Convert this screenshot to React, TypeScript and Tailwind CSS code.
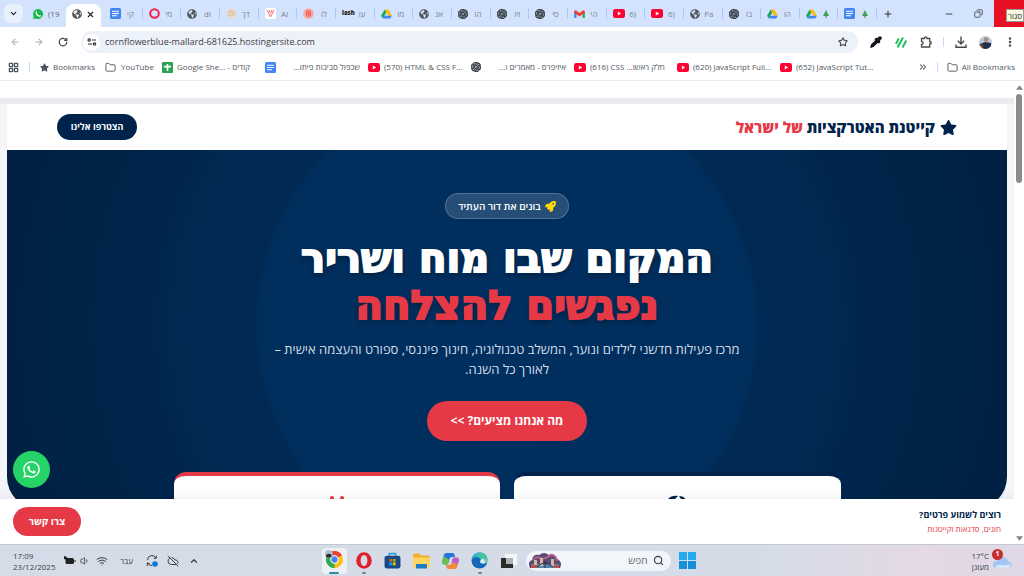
import type { ReactNode } from 'react';
import {
    ArrowLeft, ArrowRight, ChevronDown, ChevronUp, ChevronsRight, CloudOff, Copy, EllipsisVertical,
    Folder, LayoutGrid, Minus, Pipette, Plus, RotateCw, Search, Star, Volume1, Wifi, X,
} from 'lucide-react';
import { FaGlobeAmericas, FaRocket, FaStar, FaWhatsapp } from 'react-icons/fa';
import { SiOpenai } from 'react-icons/si';

type TabIcon = "docs" | "opera" | "globe" | "tan" | "y" | "pink" | "lash" | "drive" | "gpt" | "gmail" | "youtube" | "sheets";

const tabs: { icon: TabIcon; title: string }[] = [
    { icon: "docs", title: "קי" },
    { icon: "opera", title: "מי" },
    { icon: "globe", title: "di" },
    { icon: "tan", title: "דך" },
    { icon: "y", title: "AI" },
    { icon: "pink", title: "לו" },
    { icon: "lash", title: "עו" },
    { icon: "drive", title: "מו" },
    { icon: "globe", title: "אנ" },
    { icon: "gpt", title: "הו" },
    { icon: "gpt", title: "זיו" },
    { icon: "gpt", title: "סי" },
    { icon: "gmail", title: "הי" },
    { icon: "youtube", title: "6)" },
    { icon: "youtube", title: "6)" },
    { icon: "globe", title: "Pa" },
    { icon: "gpt", title: "בו" },
    { icon: "drive", title: "הו" },
    { icon: "drive", title: "tree" },
    { icon: "docs", title: "tree" },
];

const bookmarks: { icon: TabIcon; title: string; rtl?: boolean }[] = [
    { icon: "sheets", title: "Google She... - קודים" },
    { icon: "docs", title: "שכפול סביבות פיתו...", rtl: true },
    { icon: "youtube", title: "(570) HTML & CSS F..." },
    { icon: "gpt", title: "איזיפרס - מאמרים ו...", rtl: true },
    { icon: "youtube", title: "(616) CSS ...חלק ראשו" },
    { icon: "youtube", title: "(620) JavaScript Full..." },
    { icon: "youtube", title: "(652) JavaScript Tut..." },
];

function Favicon({ name }: { name: TabIcon }) {
    switch (name) {
        case "globe": return <FaGlobeAmericas className="size-[10px] shrink-0 text-[#55595f]" />;
        case "gpt": return <SiOpenai className="size-[10px] shrink-0 text-[#33383f]" stroke="currentColor" strokeWidth={1.5} />;
        case "youtube": return (
            <svg viewBox="0 0 12 9" className="h-[9px] w-[12px] shrink-0">
                <rect width="12" height="9" rx="2.2" fill="#ff0033" />
                <path d="M4.8 2.5v4l3.4-2z" fill="#fff" />
            </svg>
        );
        case "docs": return (
            <svg viewBox="0 0 11 11" className="size-[11px] shrink-0">
                <rect width="11" height="11" rx="1.5" fill="#4285f4" />
                <path d="M2 3.2h7M2 5.5h7M2 7.8h5" stroke="#fff" strokeWidth="1.1" />
            </svg>
        );
        case "sheets": return (
            <svg viewBox="0 0 11 11" className="size-[11px] shrink-0">
                <rect width="11" height="11" rx="1" fill="#2ca24f" />
                <path d="M5.5 2v7M2 4.6h7" stroke="#fff" strokeWidth="1.6" />
            </svg>
        );
        case "opera": return (
            <svg viewBox="0 0 11 11" className="size-[11px] shrink-0">
                <circle cx="5.5" cy="5.5" r="4.3" fill="none" stroke="#fa1e4e" strokeWidth="2" />
            </svg>
        );
        case "tan": return (
            <svg viewBox="0 0 11 11" className="size-[11px] shrink-0">
                <circle cx="5.5" cy="5.5" r="5" fill="#ead9c6" />
                <path d="M2 5q2-3 4-1t3 0M2 8c2-2 5-2 7 0" fill="none" stroke="#d3b896" />
            </svg>
        );
        case "y": return (
            <svg viewBox="0 0 11 11" className="size-[11px] shrink-0">
                <rect width="11" height="11" rx="2" fill="#fff" />
                <path d="M2 2l3.5 7L9 2M4 2l1.5 3L7 2" fill="none" stroke="#ee5a5a" strokeWidth="0.9" />
            </svg>
        );
        case "pink": return (
            <svg viewBox="0 0 11 11" className="size-[11px] shrink-0">
                <circle cx="5.5" cy="5.5" r="5.3" fill="#f9a8a2" />
                <path d="M3.5 3h4v5h-4zM3.5 5.5h4M5.5 3v5" fill="none" stroke="#e8585a" strokeWidth="0.9" />
            </svg>
        );
        case "lash": return <span className="shrink-0 text-[6px] font-extrabold text-[#222]">lash</span>;
        case "drive": return (
            <svg viewBox="0 0 12 11" className="h-[10px] w-[11px] shrink-0">
                <path d="M4 .5L0 7.5l2 3 4-7z" fill="#1fa463" />
                <path d="M4 .5h4l4 7H8z" fill="#fbbc04" />
                <path d="M3.7 7.5H12l-2 3H2z" fill="#4285f4" />
            </svg>
        );
        case "gmail": return (
            <svg viewBox="0 0 12 9" className="h-[8px] w-[11px] shrink-0">
                <path d="M0 1.5v7.5h2.6V4z" fill="#4285f4" />
                <path d="M12 1.5v7.5H9.4V4z" fill="#34a853" />
                <path d="M0 1.5L1.5 0 6 3.5 10.5 0 12 1.5 12 3 6 7.2 0 3z" fill="#ea4335" />
            </svg>
        );
    }
}

function Tree() {
    return (
        <svg viewBox="0 0 6 8" className="h-[8px] w-[6px]">
            <path d="M3 0l3 6H0z" fill="#3fa557" />
            <path d="M3 5.5v2.5" stroke="#7b5a3a" />
        </svg>
    );
}

function TabStrip() {
    return (
        <div className="flex h-[27px] items-center bg-[#d3e3fd] text-[8px] text-[#5c6470]">
            <button aria-label="Search tabs" className="ml-1 flex size-[19px] items-center justify-center rounded-md bg-[#e9f0fd]">
                <ChevronDown className="size-[9px] text-[#1f1f1f]" strokeWidth={3} />
            </button>
            <button className="flex w-[43px] items-center gap-[5px] pl-[10px]">
                <svg viewBox="0 0 10 10" className="size-[10px] shrink-0">
                    <path d="M5 0a5 5 0 1 1-2.300 9.400L0 10l.7-2.600A5 5 0 0 1 5 0z" fill="#12b84b" />
                    <path d="M3.300 3q-.5 1.500 1 3t3 1" fill="none" stroke="#fff" strokeWidth="1.400" strokeLinecap="round" />
                </svg>
                <span>(19</span>
            </button>
            <div className="flex h-[23px] w-[35px] shrink-0 items-center justify-between self-end rounded-t-lg bg-white px-[6px] pb-[3px]">
                <Favicon name="globe" />
                <button aria-label="Close tab"><X className="size-[9px] text-[#1f1f1f]" strokeWidth={3} /></button>
            </div>
            <div className="flex min-w-0 flex-1 pl-[3px]">
                {tabs.map((tab, i) => (
                    <button key={i} className="flex h-[11px] min-w-0 flex-1 items-center justify-between border-r border-[#a8c7fa] pr-[8px] pl-[6px]">
                        <Favicon name={tab.icon} />
                        {tab.title === "tree" ? <Tree /> : <span className="whitespace-nowrap text-[#7a828e]" dir="auto">{tab.title}</span>}
                    </button>
                ))}
            </div>
            <button aria-label="New tab" className="flex w-[22px] justify-center"><Plus className="size-[10px] text-[#333]" strokeWidth={2.5} /></button>
            <div className="ml-[45px] flex items-center gap-[20px]">
                <button aria-label="Minimize"><Minus className="size-[10px] text-[#222]" /></button>
                <button aria-label="Restore"><Copy className="size-[9px] -scale-x-100 text-[#333]" /></button>
            </div>
            <button className="ml-[11px] flex h-full w-[30px] items-center justify-end bg-[#e81123]">
                <span className="mt-1 border border-[#999] bg-[#fbf7df] px-[1px] text-[8px] leading-[11px] text-[#333]">סגור</span>
            </button>
        </div>
    );
}

function Toolbar() {
    return (
        <div className="flex h-[30px] items-center bg-white pr-2 pl-[10px] text-[#474747]">
            <button aria-label="Back" className="mr-[14px]"><ArrowLeft className="size-[10px] text-[#aaa]" strokeWidth={2.5} /></button>
            <button aria-label="Forward" className="mr-[14px]"><ArrowRight className="size-[10px] text-[#aaa]" strokeWidth={2.5} /></button>
            <button aria-label="Reload"><RotateCw className="size-[10px]" strokeWidth={3} /></button>
            <div className="ml-[13px] flex h-[22px] flex-1 items-center rounded-full bg-[#edf1fa] pr-[10px] pl-[2px]">
                <span className="flex size-[17px] items-center justify-center rounded-full bg-white">
                    <svg viewBox="0 0 10 8" className="h-[8px] w-[10px]" fill="none" stroke="#333" strokeWidth="1.2">
                        <circle cx="2.2" cy="2" r="1.2" />
                        <path d="M5 2h4M1 6h4" />
                        <circle cx="7.5" cy="6" r="1.2" />
                    </svg>
                </span>
                <input
                    aria-label="Address"
                    className="ml-[5px] min-w-0 flex-1 bg-transparent text-[9px] text-[#3c4043] outline-none"
                    defaultValue="cornflowerblue-mallard-681625.hostingersite.com"
                />
                <button aria-label="Bookmark this page"><Star className="size-[10px]" strokeWidth={2.5} /></button>
            </div>
            <div className="ml-[12px] flex items-center gap-[13px]">
                <Pipette className="size-[12px] fill-[#1c2a5c] text-[#111]" strokeWidth={3} />
                <svg viewBox="0 0 12 11" className="h-[11px] w-[12px]" stroke="#1fbf5b" strokeWidth="2">
                    <path d="M.8 7l3-5.5M2.5 10.5L8 .5M7.5 10.5L11.3 3.5" />
                </svg>
                <svg viewBox="0 0 12 12" className="size-[12px]" fill="none" stroke="#474747" strokeWidth="1.3">
                    <path d="M1.5 2.5H4.5V1.8a1.2 1 0 0 1 2.4 0V2.5H9.7V5.5H10.2a1 1.2 0 0 1 0 2.4H9.7V11H1.5V8.500a1.600 1.600 0 0 0 0-3.200z" />
                </svg>
            </div>
            <span className="mx-[11px] h-[10px] w-px bg-[#c7dafb]" />
            <button aria-label="Downloads">
                <svg viewBox="0 0 12 12" className="size-[12px]" fill="none" stroke="#474747" strokeWidth="1.4">
                    <path d="M6 .5v7M2.8 4.8L6 8l3.2-3.2M1 8.5v2.7h10V8.5" />
                </svg>
            </button>
            <svg viewBox="0 0 13 13" className="mx-3 size-[13px] rounded-full">
                <rect width="13" height="13" fill="#b6c9dd" />
                <circle cx="7" cy="3.5" r="2.3" fill="#b98a6d" />
                <path d="M1 8l5-2 6 1v6H3z" fill="#26304a" />
                <path d="M0 8l4 1v4H0z" fill="#70533f" />
            </svg>
            <button aria-label="Menu"><EllipsisVertical className="size-[12px]" strokeWidth={3} /></button>
        </div>
    );
}

function BookmarksBar() {
    return (
        <nav className="flex h-[24px] items-center border-b border-[#e8eaee] bg-white pr-[9px] pb-[3px] pl-2 text-[8px] whitespace-nowrap text-[#50565e]">
            <LayoutGrid className="size-[11px]" strokeWidth={3} />
            <span className="mx-[10px] h-[10px] w-px bg-[#c7dafb]" />
            <a href="#" className="flex w-[53px] items-center gap-1"><FaStar className="size-[9px] shrink-0" />Bookmarks</a>
            <a href="#" className="ml-[12px] flex w-[46px] items-center gap-[5px]"><Folder className="size-[11px] shrink-0" />YouTube</a>
            <div className="ml-[11px] flex gap-[8px]">
                {bookmarks.map((b) => (
                    <a key={b.title} href="#" className="flex w-[95px] items-center gap-[4px]">
                        <Favicon name={b.icon} />
                        <span className="flex-1" dir={b.rtl ? "rtl" : "ltr"}>{b.title}</span>
                    </a>
                ))}
            </div>
            <ChevronsRight className="mr-[9px] ml-auto size-[10px]" strokeWidth={2.5} />
            <span className="mr-[9px] h-[10px] w-px bg-[#c7dafb]" />
            <a href="#" className="flex items-center gap-1"><Folder className="size-[11px]" />All Bookmarks</a>
        </nav>
    );
}

function Card({ className, children }: { className: string; children: ReactNode }) {
    return (
        <article className={`flex h-[120px] flex-1 justify-center rounded-xl border-t-4 bg-white pt-[19px] ${className}`}>
            {children}
        </article>
    );
}

function Site() {
    return (
        <div dir="rtl" className="relative flex min-w-0 flex-1 flex-col overflow-hidden bg-[#f4f5f9]">
            <div className="h-[17px] shrink-0 bg-white" />
            <div className="h-[6px] shrink-0 bg-[#ebecf0]" />
            <div className="min-h-0 flex-1 overflow-hidden px-[7px]">
                <header className="flex h-[46px] items-center justify-between bg-white px-[50px]">
                    <div className="flex items-center gap-[5px] text-[15px] font-extrabold text-[#00234b]">
                        <FaStar className="size-[17px]" />
                        <span>קייטנת האטרקציות <span className="text-[#e63946]">של ישראל</span></span>
                    </div>
                    <button className="h-[26px] w-[80px] rounded-full bg-[#00234b] text-[9px] font-bold text-white">הצטרפו אלינו</button>
                </header>
                <section className="flex h-[359px] flex-col items-center rounded-b-[32px] bg-[radial-gradient(circle_at_50%_175px,#003061_0px,#002e5c_248px,#002a53_252px,#002950_340px,#00264e_350px,#00254b_400px,#002448_412px,#002347_475px,#002144_485px)] pt-[43px] text-center text-white">
                    <div className="flex h-[26px] shrink-0 items-center gap-1 rounded-full border border-white/20 bg-white/15 px-3 text-[10px] font-semibold">
                        <FaRocket className="size-[11px] text-[#ffd60a]" />
                        בונים את דור העתיד
                    </div>
                    <h1 className="mt-4 shrink-0 font-['DejaVu_Sans','Open_Sans',sans-serif] text-[40px] leading-[47px] font-bold whitespace-nowrap [-webkit-text-stroke:2px_currentColor] [text-shadow:0_3px_6px_rgba(0,0,0,0.4)]">
                        המקום שבו מוח ושריר
                        <span className="block text-[#e63946]">נפגשים להצלחה</span>
                    </h1>
                    <p className="mt-[10px] w-[480px] shrink-0 text-[13px] leading-[20px] text-[#d3dce6]">
                        מרכז פעילות חדשני לילדים ונוער, המשלב טכנולוגיה, חינוך פיננסי, ספורט והעצמה אישית – לאורך כל השנה.
                    </p>
                    <button className="mt-[22px] h-[40px] w-[160px] shrink-0 rounded-full bg-[#e63946] text-[12px] font-bold">
                        מה אנחנו מציעים? &gt;&gt;
                    </button>
                    <div className="mt-[31px] flex w-[667px] gap-[14px]">
                        <Card className="border-[#00234b]">
                            <svg viewBox="0 0 20 16" className="h-[16px] w-[20px]" fill="#00234b">
                                <path d="M1 4q4-4 10-3L7 5zM12 1q6 0 7 5l-5-2z" />
                            </svg>
                        </Card>
                        <Card className="border-[#e63946]">
                            <svg viewBox="0 0 20 16" className="h-[16px] w-[20px]" fill="#e63946">
                                <rect x="3" y="1" width="4" height="8" rx="2" />
                                <rect x="13" y="1" width="4" height="8" rx="2" />
                            </svg>
                        </Card>
                    </div>
                </section>
            </div>
            <a href="#" aria-label="WhatsApp" className="absolute bottom-14 left-[13px] flex size-[37px] items-center justify-center rounded-full bg-[#25d366] text-white">
                <FaWhatsapp className="size-[19px]" />
            </a>
            <footer className="z-10 flex h-[45px] shrink-0 items-center justify-between bg-white px-[13px] shadow-[0_-4px_8px_rgba(0,0,0,0.05)]">
                <div>
                    <p className="text-[9px] leading-[14px] font-bold text-[#00234b]">רוצים לשמוע פרטים?</p>
                    <p className="text-[8px] leading-[14px] text-[#e63946]">חוגים, סדנאות וקייטנות</p>
                </div>
                <button className="h-[29px] w-[68px] rounded-full bg-[#e63946] text-[10px] font-bold text-white">צרו קשר</button>
            </footer>
        </div>
    );
}

function Scrollbar() {
    return (
        <div className="flex w-[10px] shrink-0 flex-col items-center justify-between bg-white pt-[4px] pb-[3px]">
            <div className="flex flex-col items-center gap-1">
                <svg viewBox="0 0 6 4" className="h-[5px] w-[7px]"><path d="M3 0l3 4H0z" fill="#858585" /></svg>
                <div className="h-[89px] w-[6px] rounded-full bg-[#8b8b8b]" />
            </div>
            <svg viewBox="0 0 6 4" className="h-[5px] w-[7px]"><path d="M0 0h6L3 4z" fill="#858585" /></svg>
        </div>
    );
}

function TaskbarApp({ label, mark, children }: { label: string; mark?: string; children: ReactNode }) {
    return (
        <button aria-label={label} className="flex h-[26px] w-[18px] flex-col items-center justify-end gap-[3px]">
            {children}
            <span className={`h-[2px] w-1 rounded-full ${mark ?? ""}`} />
        </button>
    );
}

function Taskbar() {
    return (
        <div className="flex h-[32px] shrink-0 items-center border-t border-[#c3c9d3] bg-linear-to-r from-[#d5dce8] from-75% via-[#e4d9e5] via-90% to-[#e0d8e6] text-[8px] text-[#3b3f45]">
            <div className="flex flex-1 items-center pl-[13px]">
                <div className="w-[51px] leading-[11px]">17:09<br />23/12/2025</div>
                <svg viewBox="0 0 12 9" className="h-[9px] w-[12px]">
                    <rect x="1.5" y="2" width="8.5" height="6" rx="1.5" fill="#222" />
                    <path d="M10.5 4h1v2h-1zM0 0l3 1v3L0 3z" fill="#222" />
                </svg>
                <Volume1 className="ml-1 size-[10px]" />
                <Wifi className="ml-[6px] size-[12px]" />
                <span className="ml-3 w-[26px]">עבר</span>
                <svg viewBox="0 0 12 12" className="size-[12px]" fill="none" stroke="#3b3f45" strokeWidth="1">
                    <path d="M1.5 5A4.5 4.5 0 0 1 10 3M10.3.8V3.3H7.8M1.5 7.5A4.5 4.5 0 0 0 6 10.5M1.2 11V8.3h2.5" />
                    <circle cx="9" cy="9" r="2.8" fill="#0f78d4" stroke="none" />
                </svg>
                <CloudOff className="ml-[9px] size-[12px]" />
                <ChevronUp className="ml-[10px] size-[10px]" strokeWidth={3} />
            </div>
            <div className="mr-2 flex items-center gap-2">
                <button aria-label="Chrome" className="flex h-[26px] w-[25px] flex-col items-center justify-end gap-[3px] rounded-sm bg-[#edf0f6]">
                    <svg viewBox="0 0 20 20" className="size-[19px]">
                        <circle cx="10" cy="10" r="9" fill="#fbc116" />
                        <path d="M10 10L2.2 5.5A9 9 0 0 1 17.8 5.5z" fill="#ea4335" />
                        <path d="M10 10L2.2 5.5A9 9 0 0 0 10 19z" fill="#34a853" />
                        <circle cx="10" cy="10" r="4.4" fill="#fff" />
                        <circle cx="10" cy="10" r="3.3" fill="#4285f4" />
                        <circle cx="4" cy="4" r="4" fill="#aebfd0" />
                        <path d="M1 7q0-3 3-3t3 3l-3 1z" fill="#222b38" />
                    </svg>
                    <span className="h-[2px] w-[10px] rounded-full bg-[#2b8a9c]" />
                </button>
                <div className="flex items-center gap-[11px]">
                    <TaskbarApp label="Opera" mark="bg-[#7b818b]">
                        <svg viewBox="0 0 16 17" className="h-[17px] w-[16px]">
                            <ellipse cx="8" cy="8.5" rx="7.8" ry="8.300" fill="#e0202c" />
                            <ellipse cx="8" cy="8.5" rx="3.4" ry="5.600" fill="#d5dce8" />
                        </svg>
                    </TaskbarApp>
                    <TaskbarApp label="Store">
                        <svg viewBox="0 0 16 16" className="size-[17px]">
                            <path d="M5 4V1.5h6V4" fill="none" stroke="#2aa4dc" strokeWidth="1.5" />
                            <rect x="0.5" y="3.5" width="15" height="12" rx="2" fill="#1a4a86" />
                            <path d="M5 6.5h2.7v2.7H5z" fill="#f25022" />
                            <path d="M8.3 6.5H11v2.7H8.3z" fill="#7fba00" />
                            <path d="M5 9.8h2.7v2.7H5z" fill="#00a4ef" />
                            <path d="M8.3 9.8H11v2.7H8.3z" fill="#ffb900" />
                        </svg>
                    </TaskbarApp>
                    <TaskbarApp label="Files">
                        <svg viewBox="0 0 17 15" className="h-[16px] w-[17px]">
                            <path d="M0 1.5Q0 0 1.5 0H6l2 2h7.5Q17 2 17 3.5V13H0z" fill="#efaf2c" />
                            <path d="M0 4h17v10H0z" fill="#ffd55e" />
                            <path d="M3 10.5h11V15H3z" fill="#1a7cc7" />
                        </svg>
                    </TaskbarApp>
                    <TaskbarApp label="Copilot">
                        <svg viewBox="0 0 17 16" className="h-[16px] w-[17px]">
                            <path d="M4.5 0h6q1.5 0 2 1.8l.6 2.2H9.5Q8.2 4 7.7 5.5L6.5 10Q6 11.5 4.5 11.5H2.5Q-.3 11.5.2 8.5L1.5 3Q2.2 0 4.5 0z" fill="#2378d8" />
                            <path d="M1.5 3L.2 8.5q-.5 3 2.3 3h2Q6 11.5 6.5 10l.8-3z" fill="#6cc04a" />
                            <path d="M12.5 16h-6q-1.5 0-2-1.8L3.9 12h3.6q1.3 0 1.8-1.5L10.5 6Q11 4.5 12.5 4.5h2Q17.3 4.5 16.8 7.5L15.5 13q-.7 3-3 3z" fill="#f08a3c" />
                            <path d="M10.5 6Q11 4.5 12.5 4.5h2Q17.3 4.5 16.8 7.5L16 11 9.7 9z" fill="#b95fd6" />
                        </svg>
                    </TaskbarApp>
                    <TaskbarApp label="Edge" mark="bg-[#7b818b]">
                        <svg viewBox="0 0 17 17" className="size-[17px]">
                            <circle cx="8.5" cy="8.5" r="8" fill="#1568b8" />
                            <path d="M.6 8Q1 1 8.5.5T16.5 8q-.5 4-5 3.5Q8 11 9.5 8.5 9 5 5.5 5 2 5 .6 8z" fill="#36b9d6" />
                            <path d="M9.5 8.5q-1.5 2.5 2 3 4.5.5 5-3.5L12 6z" fill="#dceaf5" />
                            <path d="M8.5.5Q16 1 16.5 8q-.3 2.5-2.5 3.3Q14 5 5.5 5z" fill="#43c97e" opacity=".7" />
                        </svg>
                    </TaskbarApp>
                    <TaskbarApp label="Task view">
                        <svg viewBox="0 0 16 15" className="h-[15px] w-[16px]">
                            <path d="M4 0h12v11H4z" fill="#f4f5f7" />
                            <path d="M0 4h5v6h7v4H0z" fill="#2b2b2b" />
                            <path d="M5 4h7v6H5z" fill="#adb1b8" />
                        </svg>
                    </TaskbarApp>
                </div>
                <div className="flex h-[20px] w-[145px] items-center rounded-full bg-[#f2f5fa] pr-[7px] pl-[2px]">
                    <svg viewBox="0 0 34 18" className="h-[18px] w-[34px]">
                        <path d="M2 16Q-1 10 4 8 5 2 11 3q5-4 10 0 7-1 8 4 6 3 3 9z" fill="#574c74" />
                        <path d="M5 8Q8 4 12 6t9-2 8 5" stroke="#b6618d" strokeWidth="2" fill="none" />
                        <path d="M3 12h28v4H3z" fill="#4f86a8" />
                        <path d="M6 8h3v6H6zM12 6h3v8h-3zM23 7h3v7h-3z" fill="#deb2a0" />
                        <path d="M9 15q8-8 16 0M17 9v7" stroke="#302c45" fill="none" />
                        <path d="M3 13h6v3H3zM26 13h5v3h-5z" fill="#b65247" />
                    </svg>
                    <input aria-label="חיפוש" dir="rtl" placeholder="חפש" className="min-w-0 flex-1 bg-transparent pr-[5px] text-[10px] outline-none placeholder:text-[#666c75]" />
                    <Search className="size-[11px]" strokeWidth={2.5} />
                </div>
                <button aria-label="Start">
                    <svg viewBox="0 0 17 17" className="size-[17px]">
                        <path d="M0 0h8v8H0zM9 0h8v8H9z" fill="#26a9ec" />
                        <path d="M0 9h8v8H0zM9 9h8v8H9z" fill="#1690d8" />
                    </svg>
                </button>
            </div>
            <div className="flex flex-1 items-center justify-end gap-[3px] pr-[12px]">
                <div className="text-right leading-[11px]">17°C<br />מעונן</div>
                <div className="relative">
                    <svg viewBox="0 0 20 16" className="h-[16px] w-[20px]">
                        <path d="M5 15q-4 0-4-3.5T5 8q1-4 5.5-4T16 8.5q3.5 0 3.5 3T16 15z" fill="#a4c4f4" />
                        <path d="M3 14q3-3 7-2t8-1q1 4-3 4H5z" fill="#d6e6fd" />
                    </svg>
                    <span className="absolute -top-1 left-0 flex size-[11px] items-center justify-center rounded-full bg-[#c92a2a] text-[7px] font-bold text-white">1</span>
                </div>
            </div>
        </div>
    );
}

export default function App() {
    return (
        <div className="flex h-screen flex-col overflow-hidden bg-white font-['Open_Sans','Noto_Sans',sans-serif]">
            <TabStrip />
            <Toolbar />
            <BookmarksBar />
            <main className="flex min-h-0 flex-1">
                <Site />
                <Scrollbar />
            </main>
            <Taskbar />
        </div>
    );
}
